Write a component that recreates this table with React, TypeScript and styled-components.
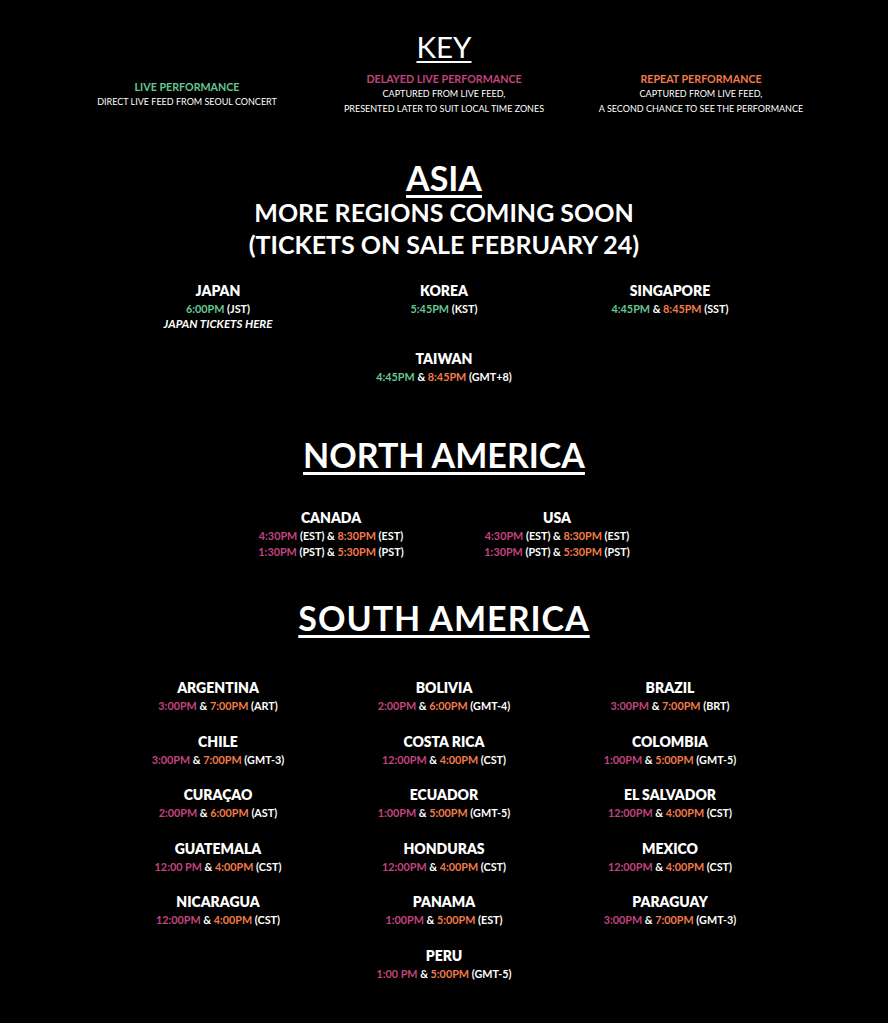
import React from 'react';
import styled, { createGlobalStyle } from 'styled-components';

const Colors = {
  bg: '#000000',
  white: '#ffffff',
  live: '#66c792',
  delayed: '#c2447d',
  repeat: '#f27b4b',
};

type Kind = 'live' | 'delayed' | 'repeat' | 'plain';

// a schedule line is a list of pieces: [text, kind]
type Piece = [string, Kind];

interface Country {
  name: string;
  lines: Piece[][];
  note?: string;
}

const t = (time: string, kind: Kind): Piece => [time, kind];
const p = (text: string): Piece => [text, 'plain'];

const pair = (a: string, b: string, zone: string): Piece[] => [
  t(a, 'delayed'),
  p(' & '),
  t(b, 'repeat'),
  p(` (${zone})`),
];

const asia: Country[] = [
  { name: 'JAPAN', lines: [[t('6:00PM', 'live'), p(' (JST)')]], note: 'JAPAN TICKETS HERE' },
  { name: 'KOREA', lines: [[t('5:45PM', 'live'), p(' (KST)')]] },
  { name: 'SINGAPORE', lines: [[t('4:45PM', 'live'), p(' & '), t('8:45PM', 'repeat'), p(' (SST)')]] },
  { name: 'TAIWAN', lines: [[t('4:45PM', 'live'), p(' & '), t('8:45PM', 'repeat'), p(' (GMT+8)')]] },
];

const northAmerica: Country[] = [
  {
    name: 'CANADA',
    lines: [
      [t('4:30PM', 'delayed'), p(' (EST) & '), t('8:30PM', 'repeat'), p(' (EST)')],
      [t('1:30PM', 'delayed'), p(' (PST) & '), t('5:30PM', 'repeat'), p(' (PST)')],
    ],
  },
  {
    name: 'USA',
    lines: [
      [t('4:30PM', 'delayed'), p(' (EST) & '), t('8:30PM', 'repeat'), p(' (EST)')],
      [t('1:30PM', 'delayed'), p(' (PST) & '), t('5:30PM', 'repeat'), p(' (PST)')],
    ],
  },
];

const southAmerica: Country[] = [
  { name: 'ARGENTINA', lines: [pair('3:00PM', '7:00PM', 'ART')] },
  { name: 'BOLIVIA', lines: [pair('2:00PM', '6:00PM', 'GMT-4')] },
  { name: 'BRAZIL', lines: [pair('3:00PM', '7:00PM', 'BRT')] },
  { name: 'CHILE', lines: [pair('3:00PM', '7:00PM', 'GMT-3')] },
  { name: 'COSTA RICA', lines: [pair('12:00PM', '4:00PM', 'CST')] },
  { name: 'COLOMBIA', lines: [pair('1:00PM', '5:00PM', 'GMT-5')] },
  { name: 'CURAÇAO', lines: [pair('2:00PM', '6:00PM', 'AST')] },
  { name: 'ECUADOR', lines: [pair('1:00PM', '5:00PM', 'GMT-5')] },
  { name: 'EL SALVADOR', lines: [pair('12:00PM', '4:00PM', 'CST')] },
  { name: 'GUATEMALA', lines: [pair('12:00 PM', '4:00PM', 'CST')] },
  { name: 'HONDURAS', lines: [pair('12:00PM', '4:00PM', 'CST')] },
  { name: 'MEXICO', lines: [pair('12:00PM', '4:00PM', 'CST')] },
  { name: 'NICARAGUA', lines: [pair('12:00PM', '4:00PM', 'CST')] },
  { name: 'PANAMA', lines: [pair('1:00PM', '5:00PM', 'EST')] },
  { name: 'PARAGUAY', lines: [pair('3:00PM', '7:00PM', 'GMT-3')] },
  { name: 'PERU', lines: [pair('1:00 PM', '5:00PM', 'GMT-5')] },
];

const keyItems: { title: string; kind: Kind; lines: string[] }[] = [
  { title: 'LIVE PERFORMANCE', kind: 'live', lines: ['DIRECT LIVE FEED FROM SEOUL CONCERT'] },
  {
    title: 'DELAYED LIVE PERFORMANCE',
    kind: 'delayed',
    lines: ['CAPTURED FROM LIVE FEED,', 'PRESENTED LATER TO SUIT LOCAL TIME ZONES'],
  },
  {
    title: 'REPEAT PERFORMANCE',
    kind: 'repeat',
    lines: ['CAPTURED FROM LIVE FEED,', 'A SECOND CHANCE TO SEE THE PERFORMANCE'],
  },
];

const CountryBlock = ({ country }: { country: Country }) => (
  <CountryCell>
    <CountryName>{country.name}</CountryName>
    {country.lines.map((line, i) => (
      <TimeLine key={i}>
        {line.map(([text, kind], j) => (
          <Time key={j} kind={kind}>
            {text}
          </Time>
        ))}
      </TimeLine>
    ))}
    {country.note && <Note>{country.note}</Note>}
  </CountryCell>
);

const App = () => {
  return (
    <>
      <GlobalStyle />
      <Page>
        <KeySection>
          <KeyTitle>KEY</KeyTitle>
          <KeyRow>
            {keyItems.map((item) => (
              <KeyCell key={item.title}>
                <KeyLabel kind={item.kind}>{item.title}</KeyLabel>
                {item.lines.map((line) => (
                  <KeyText key={line}>{line}</KeyText>
                ))}
              </KeyCell>
            ))}
          </KeyRow>
        </KeySection>

        <Region top={44}>
          <RegionTitle>ASIA</RegionTitle>
          <SubTitle>MORE REGIONS COMING SOON</SubTitle>
          <SubTitle>(TICKETS ON SALE FEBRUARY 24)</SubTitle>
          <CountryGrid rowGap={18} top={21}>
            {asia.map((c) => (
              <CountryBlock key={c.name} country={c} />
            ))}
          </CountryGrid>
        </Region>

        <Region top={52}>
          <RegionTitle>NORTH AMERICA</RegionTitle>
          <CountryGrid rowGap={0} top={35}>
            {northAmerica.map((c) => (
              <CountryBlock key={c.name} country={c} />
            ))}
          </CountryGrid>
        </Region>

        <Region top={40}>
          <RegionTitle wide>SOUTH AMERICA</RegionTitle>
          <CountryGrid rowGap={17.5} top={42}>
            {southAmerica.map((c) => (
              <CountryBlock key={c.name} country={c} />
            ))}
          </CountryGrid>
        </Region>
      </Page>
    </>
  );
};

const GlobalStyle = createGlobalStyle`
  html, body {
    margin: 0;
    padding: 0;
    background: ${Colors.bg};
  }
  body {
    font-family: Lato, "Open Sans", "Liberation Sans", sans-serif;
    color: ${Colors.white};
  }
`;

const Page = styled.div`
  width: 888px;
  min-height: 1023px;
  padding: 31px 0 40px;
  box-sizing: border-box;
  display: flex;
  flex-direction: column;
  align-items: center;
  text-align: center;
`;

const KeySection = styled.div`
  display: flex;
  flex-direction: column;
  align-items: center;
`;

const KeyTitle = styled.div`
  font-size: 29.5px;
  font-weight: 400;
  line-height: 32px;
  text-decoration: underline;
  text-decoration-thickness: 2px;
  text-underline-offset: 3px;
`;

const KeyRow = styled.div`
  display: grid;
  grid-template-columns: repeat(3, 257px);
  align-items: center;
  margin-top: 9px;
`;

const KeyCell = styled.div`
  display: flex;
  flex-direction: column;
  align-items: center;
`;

const colorFor = (kind: Kind) => (kind === 'plain' ? Colors.white : Colors[kind]);

const KeyLabel = styled.div<{ kind: Kind }>`
  font-size: 10.7px;
  font-weight: 700;
  line-height: 14px;
  color: ${(props) => colorFor(props.kind)};
`;

const KeyText = styled.div`
  font-size: 9px;
  line-height: 15px;
`;

const Region = styled.div<{ top: number }>`
  display: flex;
  flex-direction: column;
  align-items: center;
  margin-top: ${(props) => props.top}px;
`;

const RegionTitle = styled.div<{ wide?: boolean }>`
  font-size: 34px;
  font-weight: 700;
  line-height: 36px;
  letter-spacing: ${(props) => (props.wide ? '1px' : '0')};
  text-decoration: underline;
  text-decoration-thickness: 3px;
  text-underline-offset: 4px;
`;

const SubTitle = styled.div`
  font-size: 25px;
  font-weight: 700;
  line-height: 32px;
`;

const CountryGrid = styled.div<{ rowGap: number; top: number }>`
  display: flex;
  flex-wrap: wrap;
  justify-content: center;
  width: 678px;
  row-gap: ${(props) => props.rowGap}px;
  margin-top: ${(props) => props.top}px;
`;

const CountryCell = styled.div`
  width: 226px;
  display: flex;
  flex-direction: column;
  align-items: center;
`;

const CountryName = styled.div`
  font-size: 14px;
  font-weight: 800;
  line-height: 20px;
`;

const TimeLine = styled.div`
  font-size: 10.8px;
  font-weight: 700;
  line-height: 16px;
  white-space: pre;
`;

const Time = styled.span<{ kind: Kind }>`
  color: ${(props) => colorFor(props.kind)};
`;

const Note = styled.div`
  font-size: 11.5px;
  font-weight: 700;
  font-style: italic;
  line-height: 14px;
`;

export default App;
